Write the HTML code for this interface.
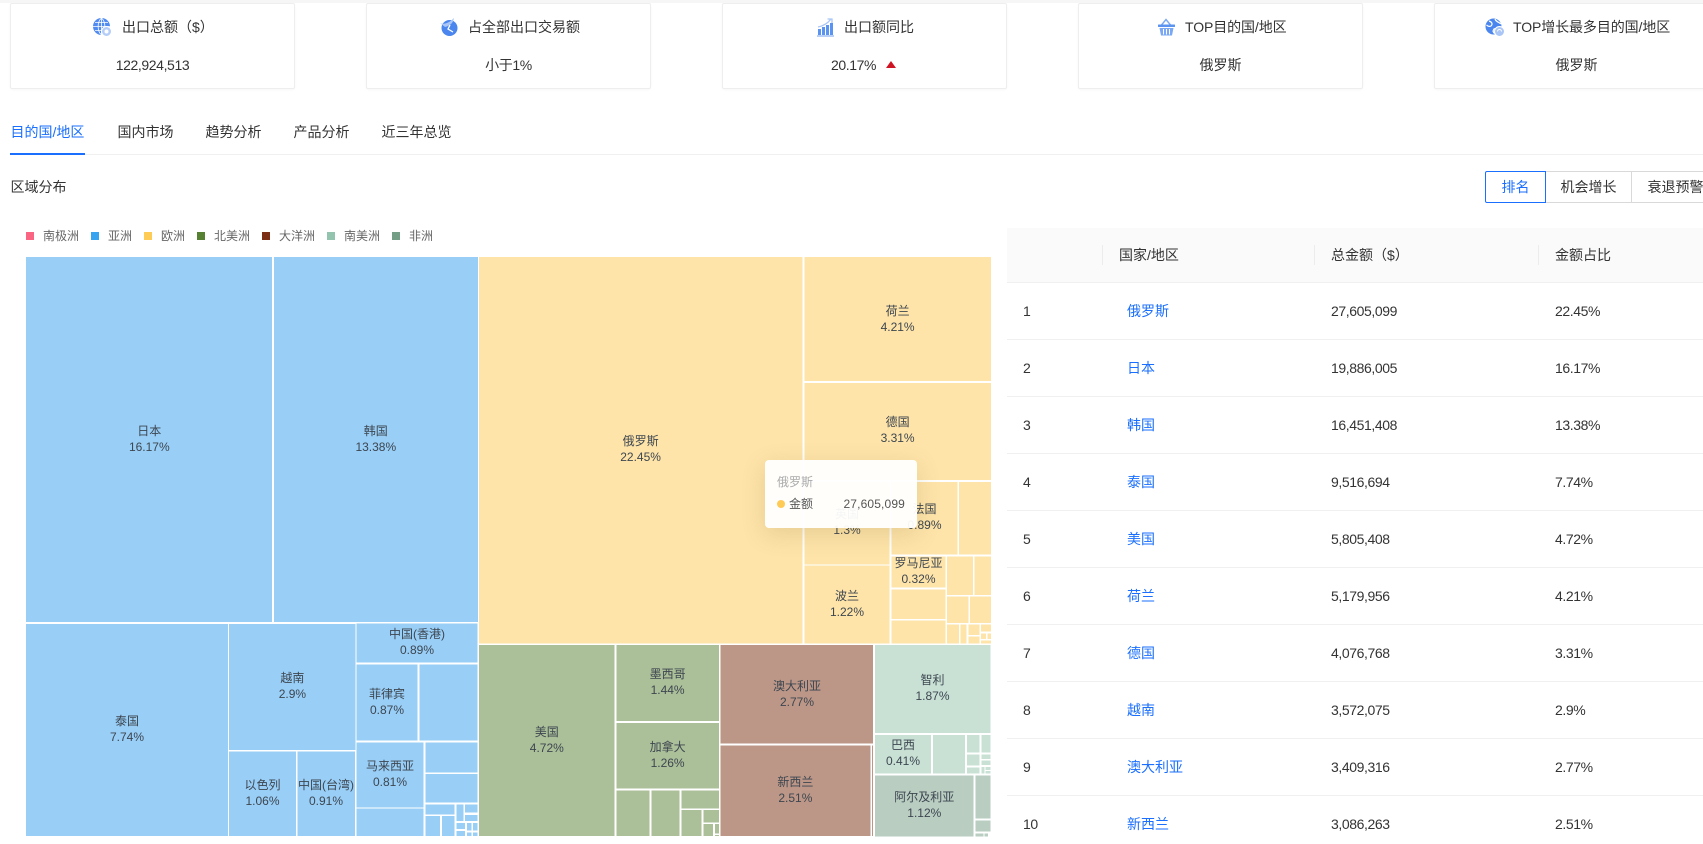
<!DOCTYPE html>
<html lang="zh-CN">
<head>
<meta charset="utf-8">
<title>目的国/地区</title>
<style>
html,body{margin:0;padding:0;background:#fff;width:1703px;height:844px;overflow:hidden}
body{position:relative;font-family:"Liberation Sans","Noto Sans CJK SC",sans-serif;font-size:14px;color:#333}
.a{position:absolute;white-space:nowrap;line-height:20px}
.n{letter-spacing:-.4px}
.card{position:absolute;top:3px;width:283px;height:84px;border:1px solid #eee;border-radius:2px;background:#fff;box-shadow:0 1px 2px rgba(0,0,0,.03)}
.val{position:absolute;left:0;right:0;top:51px;text-align:center;line-height:20px}
.ic{position:absolute;top:18px}
.btn{position:absolute;top:171px;height:30px;line-height:30px;text-align:center;background:#fff;border:1px solid #d9d9d9;box-sizing:content-box}
.row{position:absolute;left:1007px;right:0;height:56px;border-bottom:1px solid #f0f0f0}
.link{color:#1a6fff}
.sep{position:absolute;top:245px;width:1px;height:20px;background:#ececec}
.lg{position:absolute;top:232px;width:8px;height:8px}
.lt{position:absolute;top:226px;font-size:12px;color:#666;line-height:20px;white-space:nowrap}
svg text{font-family:"Liberation Sans","Noto Sans CJK SC",sans-serif;font-size:12px;fill:#3d4650;text-anchor:middle}
.tip{position:absolute;left:765px;top:460px;width:152px;height:68px;background:rgba(255,255,255,.95);border-radius:4px;box-shadow:0 6px 24px rgba(120,100,40,.18)}
</style>
</head>
<body>
<div style="position:absolute;left:0;top:0;width:1703px;height:3px;background:#f6f6f6"></div>

<div class="card" style="left:10px"><div class="val n">122,924,513</div></div>
<div class="card" style="left:366px"><div class="val n">小于1%</div></div>
<div class="card" style="left:722px"></div>
<div class="card" style="left:1078px"><div class="val">俄罗斯</div></div>
<div class="card" style="left:1434px"><div class="val">俄罗斯</div></div>

<svg class="ic" style="left:93px" width="19" height="19" viewBox="0 0 19 19">
<circle cx="8.5" cy="8.5" r="8.5" fill="#4f8bf0"/>
<path d="M8.5 0V17M0 8.5H17M2 4.5H15M2 12.5H15M8.5 0C4 4 4 13 8.5 17M8.5 0C13 4 13 13 8.5 17" fill="none" stroke="#fff" stroke-width=".8"/>
<circle cx="13.5" cy="13.5" r="5" fill="#b4cdf8" stroke="#fff"/><circle cx="13.5" cy="13.5" r="2" fill="#fff"/>
</svg>
<svg class="ic" style="left:440px" width="18" height="18" viewBox="0 0 18 18">
<circle cx="9.5" cy="10" r="8" fill="#4a86ee"/>
<path d="M0 5C4 7 9 5 14 0C13 6 9 8 5 9Z" fill="#a9c6f7"/>
<path d="M10 7L8 11L13 14" fill="none" stroke="#fff" stroke-width="1.3"/>
</svg>
<svg class="ic" style="left:817px" width="18" height="19" viewBox="0 0 18 19">
<rect x="1" y="11" width="3" height="6" fill="#5b93f1"/><rect x="5" y="9" width="3" height="8" fill="#5b93f1"/><rect x="9" y="7" width="3" height="10" fill="#5b93f1"/><rect x="13" y="5" width="3" height="12" fill="#5b93f1"/>
<rect x="0" y="17" width="17" height="2" fill="#b8d0f8"/>
<path d="M1 9C6 8 11 5 14 1M10.5 1H15V5" fill="none" stroke="#a9c6f7" stroke-width="1.3"/>
</svg>
<svg class="ic" style="left:1157px" width="19" height="18" viewBox="0 0 19 18">
<path d="M4.5 7L9 1.5L13.5 7" fill="none" stroke="#7ba8f4" stroke-width="1.4"/>
<rect x="1" y="6.5" width="17" height="2.5" rx=".5" fill="#5b93f1"/>
<path d="M2.5 10H16.5L15 17.5H4Z" fill="#7ba8f4"/>
<path d="M6.5 11V16.5M9.5 11V16.5M12.5 11V16.5" stroke="#fff" stroke-width="1"/>
</svg>
<svg class="ic" style="left:1485px" width="20" height="19" viewBox="0 0 20 19">
<circle cx="8.5" cy="8.5" r="8" fill="#4a86ee"/>
<path d="M4 3C7 4 8 6 6 8C4 9 3 8 1.5 7M10 1C11 4 14 4 16 6M9 11C11 10 13 11 12 14C11 16 9 16 8 13Z" fill="none" stroke="#fff" stroke-width="1.2"/>
<circle cx="14.5" cy="13.5" r="5" fill="#a9c6f7" stroke="#fff"/><path d="M12.5 13.5A2 2 0 0 1 16.5 13.5" fill="none" stroke="#fff"/>
</svg>

<div class="a" style="left:122px;top:17px">出口总额（$）</div>
<div class="a" style="left:468px;top:17px">占全部出口交易额</div>
<div class="a" style="left:844px;top:17px">出口额同比</div>
<div class="a" style="left:1185px;top:17px;letter-spacing:-.1px">TOP目的国/地区</div>
<div class="a" style="left:1513px;top:17px;letter-spacing:-.1px">TOP增长最多目的国/地区</div>
<div class="a n" style="left:831px;top:55px">20.17%</div>
<div style="position:absolute;left:886px;top:61px;width:0;height:0;border-left:5.5px solid transparent;border-right:5.5px solid transparent;border-bottom:7px solid #cf1322"></div>

<div style="position:absolute;left:10px;right:0;top:154px;height:1px;background:#f0f0f0"></div>
<div style="position:absolute;left:10px;top:153px;width:75px;height:2px;background:#1a6fff"></div>
<div class="a" style="left:10.5px;top:122px;color:#1a6fff">目的国/地区</div>
<div class="a" style="left:117.5px;top:122px">国内市场</div>
<div class="a" style="left:205.5px;top:122px">趋势分析</div>
<div class="a" style="left:293.5px;top:122px">产品分析</div>
<div class="a" style="left:381.5px;top:122px">近三年总览</div>

<div class="a" style="left:10.5px;top:177px">区域分布</div>

<div class="btn" style="left:1546px;width:85px;border-left:0">机会增长</div>
<div class="btn" style="left:1632px;width:90px;border-left:0;text-indent:-3px">衰退预警</div>
<div class="btn" style="left:1485px;width:59px;border-color:#1a6fff;color:#1a6fff;border-radius:2px 0 0 2px">排名</div>

<div class="lg" style="left:26px;background:#fb6584"></div><div class="lt" style="left:43px">南极洲</div>
<div class="lg" style="left:91px;background:#36a3f0"></div><div class="lt" style="left:108px">亚洲</div>
<div class="lg" style="left:144px;background:#ffcb57"></div><div class="lt" style="left:161px">欧洲</div>
<div class="lg" style="left:197px;background:#568133"></div><div class="lt" style="left:214px">北美洲</div>
<div class="lg" style="left:262px;background:#7b2e14"></div><div class="lt" style="left:279px">大洋洲</div>
<div class="lg" style="left:327px;background:#93c5ae"></div><div class="lt" style="left:344px">南美洲</div>
<div class="lg" style="left:392px;background:#749e85"></div><div class="lt" style="left:409px">非洲</div>

<svg style="position:absolute;left:0;top:0" width="1007" height="844" viewBox="0 0 1007 844">
<g shape-rendering="crispEdges">
<g fill="#99cef6">
<rect x="26" y="257" width="246" height="365"/><rect x="274" y="257" width="204" height="365"/>
<rect x="26" y="624" width="202" height="212"/><rect x="229" y="624" width="126.5" height="126"/>
<rect x="229" y="751.7" width="67" height="84.3"/><rect x="297.5" y="751.7" width="57.7" height="84.3"/>
<rect x="356.5" y="623.7" width="121" height="39"/><rect x="356.5" y="664.7" width="61.2" height="76"/>
<rect x="419.7" y="664.7" width="57.8" height="76"/><rect x="356.5" y="742.7" width="67.2" height="64.6"/>
<rect x="356.5" y="808.7" width="67.2" height="27.3"/><rect x="425.5" y="742.3" width="51.8" height="30"/>
<rect x="425.5" y="774" width="51.8" height="28.3"/><rect x="425.3" y="804.3" width="29.4" height="10"/>
<rect x="425.3" y="816" width="14.7" height="20"/><rect x="442" y="816" width="12.7" height="20"/>
<rect x="456.7" y="804.3" width="6.6" height="16.7"/><rect x="465" y="804.3" width="12.3" height="8.4"/>
<rect x="465" y="815" width="12.3" height="6"/><rect x="456.7" y="823" width="8.3" height="6"/>
<rect x="456.7" y="831" width="8.3" height="5"/><rect x="467" y="823" width="4.3" height="7.7"/>
<rect x="473" y="823" width="4.3" height="7.7"/><rect x="467" y="832.3" width="4.3" height="3.7"/>
<rect x="473" y="832.3" width="4.3" height="3.7"/>
</g>
<g fill="#fee4a9">
<rect x="479" y="257" width="323.3" height="386.3"/><rect x="804.3" y="257" width="186.7" height="124.2"/>
<rect x="804.3" y="383" width="186.7" height="97"/><rect x="804.3" y="482" width="85.4" height="82.3"/>
<rect x="804.3" y="565.7" width="85" height="77.6"/><rect x="891.7" y="482" width="65.6" height="72.7"/>
<rect x="959" y="482" width="32" height="72.7"/><rect x="891.7" y="556.3" width="53.6" height="31"/>
<rect x="947" y="556.3" width="26" height="38.7"/><rect x="974.7" y="556.3" width="16.3" height="38.7"/>
<rect x="891.7" y="589.3" width="53.6" height="29.7"/><rect x="891.7" y="620.7" width="53.6" height="22.6"/>
<rect x="947" y="596.7" width="21.3" height="26.3"/><rect x="970" y="596.7" width="21" height="26.3"/>
<rect x="947" y="624.7" width="12" height="18.6"/><rect x="960.7" y="624.7" width="6" height="18.6"/>
<rect x="968.3" y="624.7" width="11" height="10.3"/><rect x="968.3" y="636.7" width="11" height="6.6"/>
<rect x="981" y="624.7" width="10" height="7"/><rect x="981" y="633.3" width="5" height="5.7"/>
<rect x="987.3" y="633.3" width="3.7" height="5.7"/><rect x="981" y="640.7" width="10" height="2.6"/>
</g>
<g fill="#abbf99">
<rect x="479" y="645" width="135.7" height="191"/><rect x="616.3" y="645" width="102.7" height="76"/>
<rect x="616.3" y="723" width="102.7" height="65.7"/><rect x="616.3" y="790.7" width="33.4" height="45.3"/>
<rect x="651.7" y="790.7" width="28" height="45.3"/><rect x="681.7" y="790.7" width="37.3" height="17.6"/>
<rect x="681.7" y="810" width="20" height="26"/><rect x="703.7" y="810" width="15.3" height="12.3"/>
<rect x="703.7" y="824" width="9.3" height="12"/><rect x="715" y="824" width="4" height="9.3"/>
<rect x="715" y="835" width="4" height="1"/>
</g>
<g fill="#bc9787">
<rect x="720.5" y="645" width="152.5" height="98.7"/><rect x="720.5" y="745.7" width="149.8" height="90.3"/>
<rect x="872" y="745.7" width="1" height="90.3"/>
</g>
<g fill="#c9e1d5">
<rect x="875" y="645" width="115.5" height="88"/><rect x="875" y="735" width="56" height="38.7"/>
<rect x="933" y="735" width="32" height="38.7"/><rect x="967" y="735" width="12.3" height="17.3"/>
<rect x="981.3" y="735" width="9.2" height="17.3"/><rect x="967" y="754.3" width="12.3" height="11.4"/>
<rect x="967" y="767.7" width="12.3" height="6"/><rect x="981.3" y="754.3" width="9.2" height="4.7"/>
<rect x="981.3" y="760.7" width="9.2" height="4.3"/><rect x="981.3" y="767" width="3" height="6.7"/>
<rect x="985.5" y="767" width="5" height="3"/><rect x="985.5" y="771" width="5" height="2.7"/>
</g>
<g fill="#b9cdc1">
<rect x="875" y="775.7" width="98.7" height="60.6"/><rect x="975.7" y="775.7" width="14.8" height="42.6"/>
<rect x="975.7" y="820.3" width="14.8" height="11"/><rect x="975.7" y="833.3" width="7.7" height="3"/>
<rect x="984.7" y="833.3" width="3.3" height="3"/>
</g>
</g>
<text x="149.3" y="435">日本</text><text x="149.3" y="451">16.17%</text>
<text x="375.8" y="435">韩国</text><text x="375.8" y="451">13.38%</text>
<text x="640.6" y="445">俄罗斯</text><text x="640.6" y="461">22.45%</text>
<text x="897.6" y="315">荷兰</text><text x="897.6" y="331">4.21%</text>
<text x="897.6" y="426">德国</text><text x="897.6" y="442">3.31%</text>
<text x="847" y="518">英国</text><text x="847" y="534">1.3%</text>
<text x="924.5" y="513">法国</text><text x="924.5" y="529">0.89%</text>
<text x="918.5" y="567">罗马尼亚</text><text x="918.5" y="583">0.32%</text>
<text x="847" y="600">波兰</text><text x="847" y="616">1.22%</text>
<text x="546.8" y="736">美国</text><text x="546.8" y="752">4.72%</text>
<text x="667.6" y="678">墨西哥</text><text x="667.6" y="694">1.44%</text>
<text x="667.6" y="751">加拿大</text><text x="667.6" y="767">1.26%</text>
<text x="797" y="690">澳大利亚</text><text x="797" y="706">2.77%</text>
<text x="795.4" y="786">新西兰</text><text x="795.4" y="802">2.51%</text>
<text x="932.5" y="684">智利</text><text x="932.5" y="700">1.87%</text>
<text x="903" y="749">巴西</text><text x="903" y="765">0.41%</text>
<text x="924.3" y="801">阿尔及利亚</text><text x="924.3" y="817">1.12%</text>
<text x="127" y="725">泰国</text><text x="127" y="741">7.74%</text>
<text x="292.4" y="682">越南</text><text x="292.4" y="698">2.9%</text>
<text x="262.5" y="789">以色列</text><text x="262.5" y="805">1.06%</text>
<text x="326" y="789">中国(台湾)</text><text x="326" y="805">0.91%</text>
<text x="417" y="638">中国(香港)</text><text x="417" y="654">0.89%</text>
<text x="387" y="698">菲律宾</text><text x="387" y="714">0.87%</text>
<text x="390" y="770">马来西亚</text><text x="390" y="786">0.81%</text>
</svg>

<div class="tip">
<div class="a" style="left:12px;top:12px;font-size:12px;color:#aaa">俄罗斯</div>
<div style="position:absolute;left:12px;top:40px;width:8px;height:8px;border-radius:50%;background:#ffcb57"></div>
<div class="a" style="left:24px;top:34px;font-size:12px;color:#555">金额</div>
<div class="a" style="right:12px;top:34px;font-size:12px;color:#555;letter-spacing:.15px">27,605,099</div>
</div>

<div style="position:absolute;left:1007px;right:0;top:228px;height:55px;background:#fafafa;border-bottom:1px solid #f0f0f0;box-sizing:border-box"></div>
<div class="sep" style="left:1102px"></div><div class="sep" style="left:1314px"></div><div class="sep" style="left:1538px"></div>
<div class="a" style="left:1119px;top:245px">国家/地区</div>
<div class="a" style="left:1331px;top:245px">总金额（$）</div>
<div class="a" style="left:1555px;top:245px">金额占比</div>

<div class="row" style="top:283px"></div><div class="row" style="top:340px"></div><div class="row" style="top:397px"></div><div class="row" style="top:454px"></div><div class="row" style="top:511px"></div><div class="row" style="top:568px"></div><div class="row" style="top:625px"></div><div class="row" style="top:682px"></div><div class="row" style="top:739px"></div>

<div class="a n" style="left:1023px;top:301px">1</div><div class="a link" style="left:1127px;top:301px">俄罗斯</div><div class="a n" style="left:1331px;top:301px">27,605,099</div><div class="a n" style="left:1555px;top:301px">22.45%</div>
<div class="a n" style="left:1023px;top:358px">2</div><div class="a link" style="left:1127px;top:358px">日本</div><div class="a n" style="left:1331px;top:358px">19,886,005</div><div class="a n" style="left:1555px;top:358px">16.17%</div>
<div class="a n" style="left:1023px;top:415px">3</div><div class="a link" style="left:1127px;top:415px">韩国</div><div class="a n" style="left:1331px;top:415px">16,451,408</div><div class="a n" style="left:1555px;top:415px">13.38%</div>
<div class="a n" style="left:1023px;top:472px">4</div><div class="a link" style="left:1127px;top:472px">泰国</div><div class="a n" style="left:1331px;top:472px">9,516,694</div><div class="a n" style="left:1555px;top:472px">7.74%</div>
<div class="a n" style="left:1023px;top:529px">5</div><div class="a link" style="left:1127px;top:529px">美国</div><div class="a n" style="left:1331px;top:529px">5,805,408</div><div class="a n" style="left:1555px;top:529px">4.72%</div>
<div class="a n" style="left:1023px;top:586px">6</div><div class="a link" style="left:1127px;top:586px">荷兰</div><div class="a n" style="left:1331px;top:586px">5,179,956</div><div class="a n" style="left:1555px;top:586px">4.21%</div>
<div class="a n" style="left:1023px;top:643px">7</div><div class="a link" style="left:1127px;top:643px">德国</div><div class="a n" style="left:1331px;top:643px">4,076,768</div><div class="a n" style="left:1555px;top:643px">3.31%</div>
<div class="a n" style="left:1023px;top:700px">8</div><div class="a link" style="left:1127px;top:700px">越南</div><div class="a n" style="left:1331px;top:700px">3,572,075</div><div class="a n" style="left:1555px;top:700px">2.9%</div>
<div class="a n" style="left:1023px;top:757px">9</div><div class="a link" style="left:1127px;top:757px">澳大利亚</div><div class="a n" style="left:1331px;top:757px">3,409,316</div><div class="a n" style="left:1555px;top:757px">2.77%</div>
<div class="a n" style="left:1023px;top:814px">10</div><div class="a link" style="left:1127px;top:814px">新西兰</div><div class="a n" style="left:1331px;top:814px">3,086,263</div><div class="a n" style="left:1555px;top:814px">2.51%</div>
</body>
</html>
